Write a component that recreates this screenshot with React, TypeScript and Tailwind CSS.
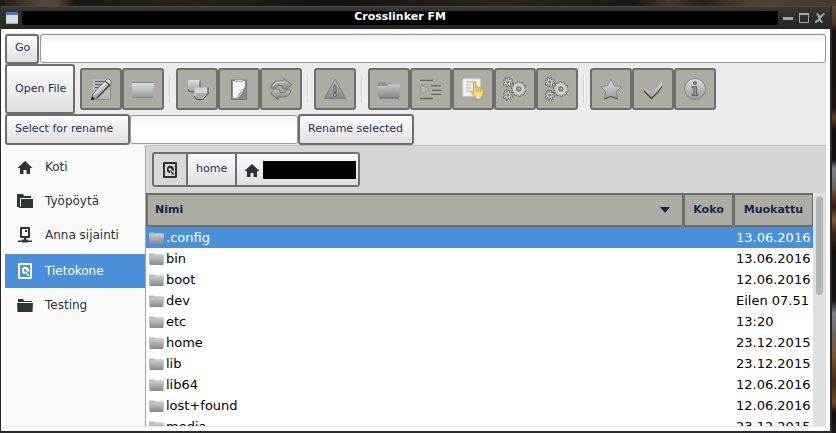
import type { ReactNode } from 'react';

type Place = {
  label: string;
  icon: ReactNode;
  active?: boolean;
};

type Entry = {
  name: string;
  modified: string;
};

const entries: Entry[] = [
  { name: '.config', modified: '13.06.2016' },
  { name: 'bin', modified: '13.06.2016' },
  { name: 'boot', modified: '12.06.2016' },
  { name: 'dev', modified: 'Eilen 07.51' },
  { name: 'etc', modified: '13:20' },
  { name: 'home', modified: '23.12.2015' },
  { name: 'lib', modified: '23.12.2015' },
  { name: 'lib64', modified: '12.06.2016' },
  { name: 'lost+found', modified: '12.06.2016' },
  { name: 'media', modified: '23.12.2015' },
];

// Gradients shared by all icons on the page
function IconDefs() {
  return (
    <svg className="absolute h-0 w-0" aria-hidden="true">
      <defs>
        <linearGradient id="silver" x1="0" y1="0" x2="0" y2="1">
          <stop offset="0" stopColor="#dedfe0" />
          <stop offset="1" stopColor="#999a9c" />
        </linearGradient>
        <linearGradient id="steel" x1="0" y1="0" x2="0" y2="1">
          <stop offset="0" stopColor="#c2c3c3" />
          <stop offset="1" stopColor="#858686" />
        </linearGradient>
        <linearGradient id="folder" x1="0" y1="0" x2="0" y2="1">
          <stop offset="0" stopColor="#cfd1d0" />
          <stop offset="1" stopColor="#868988" />
        </linearGradient>
      </defs>
    </svg>
  );
}

function Glyph({ children }: { children: ReactNode }) {
  return (
    <svg viewBox="0 0 24 24" className="h-6 w-6" aria-hidden="true">
      {children}
    </svg>
  );
}

function EditIcon() {
  return (
    <Glyph>
      <path d="M4 2h17v20H4z" fill="#b9bbbb" />
      <path d="M4 22.500h17.500V3" fill="none" stroke="#8b8c86" />
      <path d="M6 4.500h9M6 7.500h7M6 10.500h4M6 13.500h2" stroke="#5b5c59" />
      <path d="M2 23l2-6L16.500 3q2.500-2.500 5 0 1.500 2-.5 4.500L8 21z" fill="url(#silver)" stroke="#63645f" strokeWidth=".8" />
      <path d="M5.500 17.500L17.500 4.500" stroke="#e4e4e4" strokeWidth="1.800" />
      <path d="M8 21L21 7.500" stroke="#333332" strokeWidth="1.200" />
      <path d="M2 23l1.200-3.500L5.500 22z" fill="#151515" />
      <path d="M16 4l4.500 4" stroke="#4a4a48" strokeWidth="1.200" />
    </Glyph>
  );
}

function DriveFolderIcon() {
  return (
    <Glyph>
      <path d="M1 6h22l-.5 13q0 1.500-1.500 1.500H3q-1.500 0-1.500-1.500z" fill="url(#silver)" />
      <path d="M1 5.500h22" stroke="#85867f" />
      <path d="M2 20.500h20" stroke="#7f807d" strokeWidth=".8" />
    </Glyph>
  );
}

function CopyIcon() {
  return (
    <Glyph>
      <path d="M3 4.500L4 3h11v12H6q-3-.5-3-3z" fill="url(#silver)" />
      <path d="M3 12q0 2.500 3 3h9V3.500" fill="none" stroke="#50514e" strokeWidth=".9" />
      <path d="M9.500 10.500H23V17l-5.500 5.500H13q-3.500-.5-3.500-3.500z" fill="#d2d3d4" />
      <path d="M10.500 16H22v1l-5 4.500h-4q-2.500-.5-2.500-2.500z" fill="#a9aaac" />
      <path d="M9.500 19q0 3 3.500 3.500h4.500L23 17v-6.500" fill="none" stroke="#3a3a38" />
      <path d="M9.500 19v-8.500H23" fill="none" stroke="#77787" strokeWidth=".7" />
    </Glyph>
  );
}

function PasteIcon() {
  return (
    <Glyph>
      <path d="M4.500 3h15v19.500h-15z" fill="#8c8d89" stroke="#72736e" />
      <path d="M6 4h12v17H6z" fill="#f7f7f7" />
      <path d="M18 9v12H9.500z" fill="#85868a" />
      <path d="M18 9q-3 5-3.500 7t-5 5" fill="none" stroke="#d9d9d9" />
      <path d="M8 2.500h8v2H8z" fill="#d9d9d6" stroke="#85867f" strokeWidth=".5" />
      <circle cx="12" cy="1.500" r="1.200" fill="#c8c8c1" stroke="#85857f" strokeWidth=".5" />
    </Glyph>
  );
}

function RefreshIcon() {
  return (
    <Glyph>
      <g fill="url(#steel)" stroke="#6c6d69" strokeWidth=".9" strokeLinejoin="round">
        <path d="M2 11q1-7 8-7h5V1.500l7.500 6-4.500 5L13 11V8.500h-3q-3 0-4.500 3z" />
        <path d="M22 13q-1 7-8 7H9v2.500l-7.500-6 4.500-5 5 1.500v2.500h3q3 0 4.500-3z" />
      </g>
      <path d="M4 9q2-4 6-4h6" fill="none" stroke="#d9d9d6" />
    </Glyph>
  );
}

function WarningIcon() {
  return (
    <Glyph>
      <path d="M12 2l10.500 19.500h-21z" fill="url(#steel)" stroke="#7c7d79" strokeLinejoin="round" />
      <path d="M12 9v6" stroke="#5a5b58" strokeWidth="3" strokeLinecap="round" />
      <path d="M12 9v5" stroke="#b5b6b4" strokeWidth="1" strokeLinecap="round" />
      <circle cx="12" cy="18" r="1.500" fill="#b0b1af" stroke="#5a5b58" strokeWidth=".8" />
    </Glyph>
  );
}

function FolderIcon() {
  return (
    <Glyph>
      <path d="M1 6.500Q1 5 2.500 5h5.500l2.500 3H21l1 2H1z" fill="#8f908e" />
      <path d="M1 9.500h9l2-1.500h11l-.5 11.500q0 1.500-1.500 1.500H3q-1.500 0-1.500-1.500z" fill="url(#steel)" />
      <path d="M1 9.500h9l2-1.500h11" fill="none" stroke="#cdcecb" strokeWidth=".8" />
      <path d="M2 21h20" stroke="#666763" />
    </Glyph>
  );
}

function IndentIcon() {
  return (
    <Glyph>
      <path d="M1 3.500h13M12 9h10M13 13.500h10M12 17.500h10M1 21.500h13" stroke="#666763" strokeWidth="1.500" />
      <path d="M1 4.700h13M12 10.200h10M13 14.700h10M12 18.700h10" stroke="#c3c3bc" strokeWidth=".7" />
      <path d="M2 7.500l8 5-8 5z" fill="#b9bab8" stroke="#858681" strokeWidth=".7" />
    </Glyph>
  );
}

function SelectIcon() {
  return (
    <Glyph>
      <path d="M2 2h17v17H2z" fill="#f7f7f4" stroke="#dcdcd6" />
      <path d="M5 5h11M5 8h5M5 11h5M5 14h5" stroke="#aaaaa6" strokeWidth="1.200" />
      <path
        d="M12.500 16V7q0-1.500 1.200-1.500T15 7v4q1-1 2.300 0 1.400-.8 2.300.4 2-.6 2.400 1.100V17q-.2 2-1.500 3v2.500h-6V20L10 15.500q0-2 2.500.5z"
        fill="#ffdf9e"
        stroke="#dd8a20"
      />
      <path d="M15 11v4M17.300 11.500V15M19.600 12v3" stroke="#dd8a20" strokeWidth=".8" />
    </Glyph>
  );
}

// Teeth are dashes of a circle: a dark ring below, a light one on top
function Gear({ cx, cy, r, pitch }: { cx: number; cy: number; r: number; pitch: number }) {
  return (
    <g fill="none">
      <circle cx={cx} cy={cy} r={r + 1} pathLength={pitch} stroke="#555653" strokeWidth="3.400" strokeDasharray=".62 .38" />
      <circle cx={cx} cy={cy} r={r + 0.2} stroke="#666764" strokeWidth="2" />
      <circle cx={cx} cy={cy} r={r + 0.8} pathLength={pitch} stroke="#d2d3d3" strokeWidth="2.200" strokeDasharray=".4 .6" strokeDashoffset="-.11" />
      <circle cx={cx} cy={cy} r={r - 0.6} stroke="#cdcece" strokeWidth={r * 0.6} />
      <circle cx={cx} cy={cy} r={r * 0.4} fill="#a5a59d" stroke="#5a5b58" strokeWidth=".7" />
    </g>
  );
}

function GearsIcon() {
  return (
    <Glyph>
      <Gear cx={4.8} cy={5} r={2.6} pitch={8} />
      <Gear cx={4.8} cy={18.2} r={2.6} pitch={8} />
      <Gear cx={15.8} cy={12} r={5} pitch={10} />
    </Glyph>
  );
}

function StarIcon() {
  return (
    <Glyph>
      <path
        d="M12 2.500l3.400 6.200 7 1-5.200 5 1.400 7.300-6.600-2.600L5.400 22l1.400-7.300-5.200-5 7-1z"
        fill="url(#silver)"
        stroke="#777874"
        strokeWidth=".8"
        strokeLinejoin="round"
      />
      <path d="M5.400 22l6.600-2.600 6.600 2.600" fill="none" stroke="#50514e" />
    </Glyph>
  );
}

function CheckIcon() {
  return (
    <Glyph>
      <path d="M3 14l2.500-2 5 4Q16 12 20.500 5l.5 4.500Q17 16 10.500 21.500z" fill="url(#silver)" />
      <path d="M3 14l7.500 7.500Q17 16 21 9.500" fill="none" stroke="#454643" strokeWidth="1.300" />
    </Glyph>
  );
}

function InfoIcon() {
  return (
    <Glyph>
      <circle cx="12" cy="12" r="10.500" fill="url(#silver)" stroke="#858683" />
      <circle cx="12" cy="6" r="1.600" fill="#8b8c8a" stroke="#5d5e5c" strokeWidth=".8" />
      <path d="M9 9.500h4.500V17H15v1.500H9V17h2v-6H9z" fill="#9a9b99" stroke="#5d5e5c" strokeWidth=".9" />
    </Glyph>
  );
}

function PlaceGlyph({ children }: { children: ReactNode }) {
  return (
    <svg viewBox="0 0 16 16" className="h-4 w-4 shrink-0" aria-hidden="true">
      {children}
    </svg>
  );
}

function HomeGlyph() {
  return (
    <PlaceGlyph>
      <path d="M8 2l7.500 7H13v6H9.500v-4h-3v4H3V9H.5z" fill="currentColor" />
    </PlaceGlyph>
  );
}

function FolderGlyph() {
  return (
    <PlaceGlyph>
      <path d="M1 2h5l1 2h8v1H1zM0 6h16l-.5 9H.5z" fill="currentColor" />
    </PlaceGlyph>
  );
}

function DesktopGlyph() {
  return (
    <PlaceGlyph>
      <path d="M0 1h6l1 2h7v2H3v9H0z" fill="currentColor" />
      <path d="M4 6h12v9H2v-1h2z" fill="currentColor" />
    </PlaceGlyph>
  );
}

function ServerGlyph() {
  return (
    <PlaceGlyph>
      <path d="M4 1h8v9H4z" fill="none" stroke="currentColor" strokeWidth="2" strokeLinejoin="round" />
      <path d="M8 3h2v2H8zM7 10h2v3H7zM1 13.500h14V15H1zM5 12.500h6v3H5z" fill="currentColor" />
    </PlaceGlyph>
  );
}

function DiskGlyph() {
  return (
    <PlaceGlyph>
      <path d="M2 1h12v14H2z" fill="none" stroke="currentColor" strokeWidth="2" strokeLinejoin="round" />
      <path
        fillRule="evenodd"
        d="M8 3.500a4 4 0 0 1 3.600 5.700L9.300 7.500A1.400 1.400 0 1 0 8 8.700v2.600A4 4 0 0 1 8 3.500zM8.500 8l4 4.500-1.500.5L8.300 10z"
        fill="currentColor"
      />
    </PlaceGlyph>
  );
}

const places: Place[] = [
  { label: 'Koti', icon: <HomeGlyph /> },
  { label: 'Työpöytä', icon: <DesktopGlyph /> },
  { label: 'Anna sijainti', icon: <ServerGlyph /> },
  { label: 'Tietokone', icon: <DiskGlyph />, active: true },
  { label: 'Testing', icon: <FolderGlyph /> },
];

const toolGroups: { label: string; icon: ReactNode }[][] = [
  [
    { label: 'Edit', icon: <EditIcon /> },
    { label: 'New folder', icon: <DriveFolderIcon /> },
  ],
  [
    { label: 'Copy', icon: <CopyIcon /> },
    { label: 'Paste', icon: <PasteIcon /> },
    { label: 'Refresh', icon: <RefreshIcon /> },
  ],
  [{ label: 'Warning', icon: <WarningIcon /> }],
  [
    { label: 'Folder', icon: <FolderIcon /> },
    { label: 'Indent', icon: <IndentIcon /> },
    { label: 'Select', icon: <SelectIcon /> },
    { label: 'Run', icon: <GearsIcon /> },
    { label: 'Run all', icon: <GearsIcon /> },
  ],
  [
    { label: 'Favourite', icon: <StarIcon /> },
    { label: 'Accept', icon: <CheckIcon /> },
    { label: 'Info', icon: <InfoIcon /> },
  ],
];

const buttonClass =
  'shrink-0 rounded-[3px] border-2 border-[#6e6e6c] bg-linear-to-b from-[#fcfcfc] to-[#dfdfdf] px-2 text-left text-[11px] whitespace-nowrap text-[#1c325f]';
const inputClass =
  'h-[29px] rounded-[3px] border border-[#999997] bg-linear-to-b from-[#f1f1f1] to-white to-40% px-2 text-[11px] outline-none';

function TitleBar() {
  return (
    <header className="flex h-[23px] items-center gap-1 border-t border-[#4a4a48] bg-linear-to-b from-[#373735] to-[#252523] pr-1 pl-[5px]">
      <svg viewBox="0 0 12 12" className="h-3 w-3 shrink-0" aria-hidden="true">
        <path d="M0 0h12v12H0z" fill="#d9dcdf" />
        <path d="M0 0h12v3H0z" fill="#4676b4" />
        <path d="M0 11h12v1H0z" fill="#a2a5a8" />
      </svg>
      <h1 className="h-[14px] flex-1 bg-black text-center text-[11px] leading-[12px] font-bold text-white">
        Crosslinker FM
      </h1>
      <div className="flex items-center gap-1 text-[#a0aaa0]">
        <button type="button" aria-label="Minimize">
          <svg viewBox="0 0 12 12" className="h-3 w-3">
            <path d="M1 5h10v3H1z" fill="currentColor" />
          </svg>
        </button>
        <button type="button" aria-label="Maximize">
          <svg viewBox="0 0 12 12" className="h-3 w-3">
            <path d="M1.500 1.500h9v9h-9z" fill="none" stroke="currentColor" />
            <path d="M1 1h10v2H1z" fill="currentColor" />
          </svg>
        </button>
        <button type="button" aria-label="Close">
          <svg viewBox="0 0 12 12" className="h-3 w-3">
            <path d="M2.500 2.500q2-.5 3 3.500t3 4M10.500 2q-2 0-4.500 4t-5 4" fill="none" stroke="currentColor" strokeWidth="2.200" />
          </svg>
        </button>
      </div>
    </header>
  );
}

function Toolbar() {
  return (
    <div className="flex h-[50px] items-center">
      <button type="button" className={`${buttonClass} h-[50px] w-[70px]`}>
        Open File
      </button>
      <div className="ml-[5px] flex items-center">
        {toolGroups.map((group, index) => (
          <div key={index} className="flex items-center">
            {index > 0 && <div className="mx-[5px] h-7 w-[2px] border-l border-[#d2d2d2] bg-[#f6f6f6]" />}
            {group.map((tool) => (
              <button
                key={tool.label}
                type="button"
                aria-label={tool.label}
                className="flex h-[42px] w-[42px] items-center justify-center rounded-[3px] border-2 border-[#6e6e6a] bg-[#acaca3]"
              >
                {tool.icon}
              </button>
            ))}
          </div>
        ))}
      </div>
    </div>
  );
}

function Sidebar() {
  return (
    <nav className="w-[141px] shrink-0 border-r border-[#a5a5a5] bg-[#fafafa] pt-[5px]">
      <ul>
        {places.map((place) => (
          <li key={place.label} className={place.active ? 'mt-[2px]' : ''}>
            <a
              href="#"
              className={`flex h-[34px] items-center gap-3 pl-3 text-xs ${
                place.active ? 'bg-[#4a90d9] text-white' : 'text-[#2e3436]'
              }`}
            >
              {place.icon}
              {place.label}
            </a>
          </li>
        ))}
      </ul>
    </nav>
  );
}

function PathBar() {
  return (
    <div className="flex h-12 shrink-0 items-center border-t border-[#c4c4c4] bg-[#d6d6d6] px-[6px]">
      <div className="flex h-[35px] overflow-hidden rounded-[3px] border-2 border-[#6e6e6c] text-[11px] text-[#1c325f]">
        <button type="button" aria-label="/" className="bg-[#d8d8d8] px-2 text-[#2e3436]">
          <DiskGlyph />
        </button>
        <button
          type="button"
          className="border-l-2 border-[#6e6e6c] bg-linear-to-b from-[#fcfcfc] to-[#dfdfdf] px-2"
        >
          home
        </button>
        <button
          type="button"
          aria-label="Home folder"
          className="flex items-center gap-[3px] border-l-2 border-[#6e6e6c] bg-linear-to-b from-[#fcfcfc] to-[#dfdfdf] pr-[2px] pl-[7px] text-[#2e3436]"
        >
          <HomeGlyph />
          <span className="h-[18px] w-[93px] bg-black" />
        </button>
      </div>
    </div>
  );
}

function FileList() {
  const headClass = 'border-y-2 border-r border-l-2 border-[#6e6e6a] bg-[#acaca3] p-0 font-bold';

  return (
    <div className="flex min-h-0 flex-1">
      <div className="min-w-0 flex-1 overflow-hidden bg-white">
        <table className="w-full table-fixed border-separate border-spacing-0 text-left">
          <thead className="text-[11px] text-[#10264f]">
            <tr className="h-[34px]">
              <th scope="col" className={headClass}>
                <div className="flex items-center justify-between pr-3 pl-[7px]">
                  Nimi
                  <svg viewBox="0 0 10 6" className="h-[6px] w-[10px]" aria-hidden="true">
                    <path d="M0 0h10L5 6z" fill="currentColor" />
                  </svg>
                </div>
              </th>
              <th scope="col" className={`${headClass} w-[50px] text-center`}>
                Koko
              </th>
              <th scope="col" className={`${headClass} w-20 text-center`}>
                Muokattu
              </th>
            </tr>
          </thead>
          <tbody className="text-[13px] leading-[21px]">
            {entries.map((entry, index) => (
              <tr key={entry.name} className={index === 0 ? 'bg-[#4a90d9] text-white' : 'text-black'}>
                <td className="p-0">
                  <div className="flex h-[21px] items-center gap-[2px] pl-[3px]">
                    <svg viewBox="0 0 15 12" className="h-3 w-[15px]" aria-hidden="true">
                      <path d="M0 1.500q0-1 1-1h4l1 1h7l1 1v3H0z" fill="#b4b7b5" />
                      <path d="M0 2.500h6l1-1h8l-.5 9.500q0 1-1 1h-12q-1 0-1-1z" fill="url(#folder)" />
                    </svg>
                    {entry.name}
                  </div>
                </td>
                <td className="p-0" />
                <td className="p-0 pl-[3px] whitespace-nowrap">{entry.modified}</td>
              </tr>
            ))}
          </tbody>
        </table>
      </div>
      <div className="w-[13px] shrink-0 bg-[#e0e0e0] px-[3px] pt-[3px]">
        <div className="h-[99px] rounded-full bg-[#b4b5b6]" />
      </div>
    </div>
  );
}

export default function App() {
  return (
    <div className="h-screen overflow-hidden bg-[#1b1511] bg-[linear-gradient(90deg,#211b15,#5a4836_5%,#54412f_7%,#1c1713_9%,#2a211a_22%,#161210_40%,#2c241c_60%,#1c1814_76%,#4a3827_80%,#2a2019_84%,#54402c_90%,#4a3a2c)] bg-[length:100%_6px] bg-no-repeat pt-[6px] font-['DejaVu_Sans',sans-serif]">
      <IconDefs />
      <div className="h-full bg-[linear-gradient(180deg,#5c4a3a,#4a3828_4%,#15100d_6%,#1a130f_24%,#5a3e26_26%,#140f0c_29%,#120e0c_36%,#7c7f84_38%,#6a6a6c_42%,#60452a_44%,#2a1d14_47%,#7a5a3a_50%,#3a2919_53%,#14100d_58%,#17120f_69%,#7c7f86_72%,#6c655e_77%,#7a5733_82%,#3c2a1a_88%,#6a4828_93%,#15100d_95%,#1a1512)] pr-1">
        <div className="flex h-full flex-col border-r-2 border-b-2 border-l border-[#2a2a2a] bg-white">
          <TitleBar />
          <main className="flex min-h-0 flex-1 flex-col p-1">
            <div className="flex min-h-0 flex-1 flex-col border-b border-[#e6e6e6] bg-[#ebebeb]">
              <form className="flex h-[31px] items-center gap-px">
                <button type="button" className={`${buttonClass} h-[30px] w-[34px]`}>
                  Go
                </button>
                <input type="text" aria-label="Location" className={`${inputClass} min-w-0 flex-1`} />
              </form>
              <Toolbar />
              <form className="flex h-[31px] items-center">
                <button type="button" className={`${buttonClass} h-[31px] w-[125px]`}>
                  Select for rename
                </button>
                <input type="text" aria-label="New name" className={`${inputClass} w-[168px]`} />
                <button type="button" className={`${buttonClass} h-[31px] w-[116px]`}>
                  Rename selected
                </button>
              </form>
              <div className="flex min-h-0 flex-1">
                <Sidebar />
                <section className="flex min-w-0 flex-1 flex-col">
                  <PathBar />
                  <FileList />
                </section>
              </div>
            </div>
          </main>
        </div>
      </div>
    </div>
  );
}
